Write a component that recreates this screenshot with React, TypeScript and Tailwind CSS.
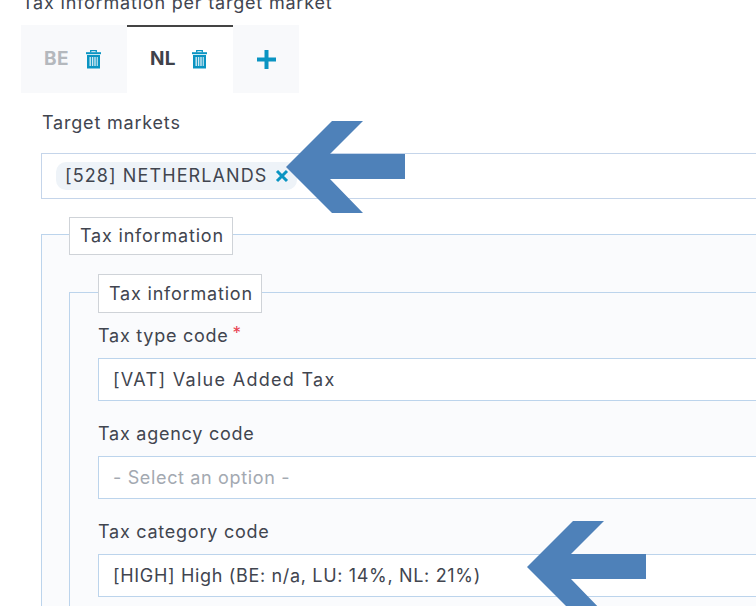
const inputClass =
  "h-[43px] flex items-center pl-[14px] bg-white border border-[#bcd4ec] -mr-10 text-[18px]";

function TrashIcon() {
  return (
    <svg width="15" height="19" viewBox="0 0 15 19" className="text-[#0a94c2]">
      <path d="M4.7 2.5V.7h5.6v1.8" fill="none" stroke="currentColor" strokeWidth="1.3" />
      <rect x="0" y="2.2" width="15" height="2" fill="currentColor" />
      <path d="M1 5h13v13.5H1z" fill="currentColor" />
      <path d="M3.5 7h1.4v9H3.5zM5.9 7h1.4v9H5.9zM8.3 7h1.4v9H8.3zM10.7 7h1.1v9h-1.1z" fill="#cfe9f3" />
    </svg>
  );
}

function Arrow({ className }: { className: string }) {
  return (
    <svg width="120" height="92" viewBox="0 0 120 92" className={className}>
      <path d="M0 46 46 0h31L44 33h75v25H44l33 34H46z" fill="#4e81b9" />
    </svg>
  );
}

function Legend({ className }: { className: string }) {
  return (
    <div className={"flex items-center w-fit bg-white border border-[#cfd3d8] pl-[10px] pr-[8px] pb-[1px] text-[18px] tracking-[0.8px] " + className}>
      Tax information
    </div>
  );
}

function Field({ label, required, children }: { label: string; required?: boolean; children: React.ReactNode }) {
  return (
    <div>
      <div className="h-[24px] flex items-center text-[18px] tracking-[0.75px] mb-[11px]">
        {label}
        {required ? <span className="ml-[4px] text-[#e8404f] text-[17px] leading-none -mt-1">*</span> : null}
      </div>
      {children}
    </div>
  );
}

export default function App() {
  return (
    <div className="relative w-[756px] h-[606px] overflow-hidden bg-white text-[#41454f] font-['Inter','Liberation_Sans',sans-serif]">
      <div className="h-[25px] flex items-end pl-[22px]">
        <div className="text-[18px] leading-[24px] tracking-[0.8px] mb-[10px] whitespace-nowrap">Tax information per target market</div>
      </div>

      <div className="flex ml-[21px] h-[68px]">
        <div className="w-[106px] bg-[#f8f9fb] flex items-center pl-[23px]">
          <span className="w-[42px] text-[19px] tracking-[0.5px] font-bold text-[#b4b8bd]">BE</span>
          <TrashIcon />
        </div>
        <div className="w-[106px] bg-white border-t-2 border-[#444444] flex items-center pl-[23px] pb-[2px]">
          <span className="w-[42px] text-[19px] tracking-[0.3px] font-bold text-[#3f424a]">NL</span>
          <TrashIcon />
        </div>
        <div className="w-[66px] bg-[#f8f9fb] flex items-center justify-center">
          <svg width="19" height="19" viewBox="0 0 19 19">
            <path d="M7.5 0h4v7.5H19v4h-7.5V19h-4v-7.5H0v-4h7.5z" fill="#0a94c2" />
          </svg>
        </div>
      </div>

      <div className="ml-[42px] mt-[17px] h-[24px] flex items-center text-[18px] tracking-[0.8px]">Target markets</div>

      <div className="ml-[41px] -mr-10 mt-[19px] h-[46px] flex items-center pl-[14px] border border-[#c5d5ea]">
        <div className="h-[28px] w-[241px] flex items-center pl-[9px] pb-[2px] rounded-[10px] bg-[#eef3f8] text-[18px] tracking-[1.1px] whitespace-nowrap">
          [528] NETHERLANDS
          <svg width="14" height="14" viewBox="0 0 14 14" className="ml-[8px] mt-[2px] shrink-0">
            <path d="M2 2l10 10M12 2 2 12" stroke="#0a94c2" strokeWidth="3" />
          </svg>
        </div>
      </div>

      <div className="ml-[41px] -mr-10 mt-[35px] h-[400px] border-l border-t border-[#bcd4ec] bg-[#fafbfd] pl-[27px]">
        <Legend className="h-[38px] -mt-[18px]" />

        <div className="mt-[37px] h-[400px] border-l border-t border-[#bcd4ec] pl-[28px] flex flex-col">
          <Legend className="h-[39px] -mt-[19px] mb-[10px]" />

          <Field label="Tax type code" required>
            <div className={inputClass + " tracking-[1.3px]"}>[VAT] Value Added Tax</div>
          </Field>
          <div className="mt-[20px]">
            <Field label="Tax agency code">
              <div className={inputClass + " text-[#a3a9b1] tracking-[0.65px]"}>- Select an option -</div>
            </Field>
          </div>
          <div className="mt-[20px]">
            <Field label="Tax category code">
              <div className={inputClass + " tracking-[0.67px]"}>[HIGH] High (BE: n/a, LU: 14%, NL: 21%)</div>
            </Field>
          </div>
        </div>
      </div>

      <Arrow className="absolute left-[286px] top-[121px]" />
      <Arrow className="absolute left-[527px] top-[521px]" />
    </div>
  );
}
